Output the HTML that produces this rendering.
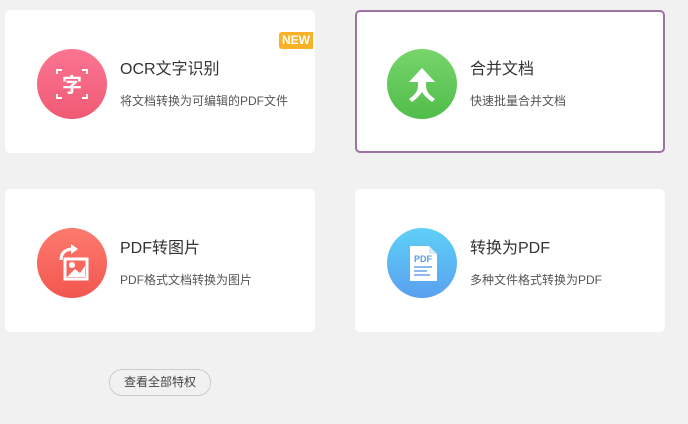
<!DOCTYPE html>
<html><head><meta charset="utf-8"><style>
body{margin:0;width:688px;height:424px;background:#f1f1f1;font-family:"Liberation Sans","Noto Sans CJK SC",sans-serif;position:relative;overflow:hidden}
.card{position:absolute;width:310px;height:143px;background:#fff;border-radius:5px;box-sizing:border-box}
.ic{position:absolute;left:32px;top:39px;width:70px;height:70px;border-radius:50%}
.t{position:absolute;left:115px;top:45px;font-size:16px;color:#333}
.s{position:absolute;left:115px;top:82px;font-size:12px;color:#555}
.new{position:absolute;left:274px;top:22px;width:34px;height:17px;background:#f9b228;color:#fff;font-size:12px;font-weight:bold;border-radius:3px 0 0 3px;text-align:center;line-height:17px}
.btn{position:absolute;left:109px;top:369px;width:100px;height:25px;border:1px solid #ccc;border-radius:13px;font-size:12px;color:#444;text-align:center;line-height:25px}
</style></head><body>
<div class="card" style="left:5px;top:10px">
 <div class="ic" style="background:linear-gradient(#fb7592,#f05a74)">
  <svg width="70" height="70" viewBox="0 0 70 70" fill="none" stroke="#fff" stroke-width="2"><path d="M20 25v-4h5M50 25v-4h-5M20 45v4h5M50 45v4h-5"/><text x="35" y="43" font-size="20" font-weight="bold" fill="#fff" stroke="none" text-anchor="middle" font-family="Noto Sans CJK SC">字</text></svg>
 </div>
 <div class="t">OCR文字识别</div><div class="s">将文档转换为可编辑的PDF文件</div>
 <div class="new">NEW</div>
</div>
<div class="card" style="left:355px;top:10px;border:2px solid #9c72a3">
 <div class="ic" style="left:30px;top:37px;background:linear-gradient(#77d56b,#50bd4a)">
  <svg width="70" height="70" viewBox="0 0 70 70"><path d="M35 19 L48 33 H39 V37 Q39 44 48 50 L45 53 Q38 48 35 43 Q32 48 25 53 L22 50 Q31 44 31 37 V33 H22 Z" fill="#fff"/></svg>
 </div>
 <div class="t" style="left:113px;top:43px">合并文档</div><div class="s" style="left:113px;top:80px">快速批量合并文档</div>
</div>
<div class="card" style="left:5px;top:189px">
 <div class="ic" style="background:linear-gradient(#fd7a6e,#f2574f)">
  <svg width="70" height="70" viewBox="0 0 70 70"><path d="M24 32 Q24 22 35 21" stroke="#fff" stroke-width="3" fill="none"/><path d="M34 16 L41 21 L34 26 Z" fill="#fff"/><rect x="28" y="31" width="22" height="20" fill="none" stroke="#fff" stroke-width="3"/><circle cx="35" cy="37" r="3" fill="#fff"/><path d="M30 49 L38 41 L43 45 L48 38 V49 Z" fill="#fff"/></svg>
 </div>
 <div class="t">PDF转图片</div><div class="s">PDF格式文档转换为图片</div>
</div>
<div class="card" style="left:355px;top:189px">
 <div class="ic" style="background:linear-gradient(#5ed0f6,#5aa0f0)">
  <svg width="70" height="70" viewBox="0 0 70 70"><path d="M23 18 H42 L50 26 V53 H23 Z" fill="#fff"/><path d="M42 18 V26 H50" fill="#dde8f5"/><text x="27" y="34" font-size="9" font-weight="bold" fill="#5a9de6" font-family="Liberation Sans">PDF</text><path d="M27 39h18M27 43h13M27 47h16" stroke="#6aa4e6" stroke-width="1.5"/></svg>
 </div>
 <div class="t">转换为PDF</div><div class="s">多种文件格式转换为PDF</div>
</div>
<div class="btn">查看全部特权</div>
</body></html>
